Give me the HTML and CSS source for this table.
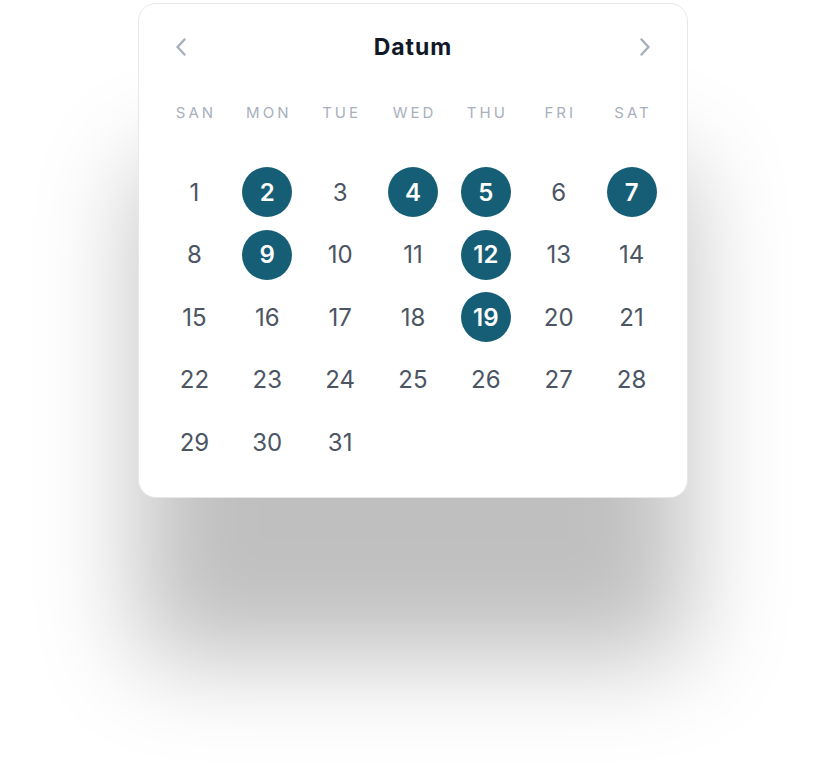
FILE: index.html
```html
<!DOCTYPE html>
<html lang="de">
<head>
<meta charset="utf-8">
<title>Datum</title>
<link rel="stylesheet" href="styles.css">
</head>
<body>
<div class="page">
<div class="card">
  <div class="header">
    <button class="nav" aria-label="Vorheriger Monat">
      <svg width="12" height="18" viewBox="0 0 12 18"><path d="M9.5 1.5 L2.5 9 L9.5 16.5" fill="none" stroke="currentColor" stroke-width="2.4" stroke-linecap="round" stroke-linejoin="round"/></svg>
    </button>
    <h1 class="title">Datum</h1>
    <button class="nav" aria-label="Nächster Monat">
      <svg width="12" height="18" viewBox="0 0 12 18"><path d="M2.5 1.5 L9.5 9 L2.5 16.5" fill="none" stroke="currentColor" stroke-width="2.4" stroke-linecap="round" stroke-linejoin="round"/></svg>
    </button>
  </div>
  <div class="weekdays">
    <span>SAN</span><span>MON</span><span>TUE</span><span>WED</span><span>THU</span><span>FRI</span><span>SAT</span>
  </div>
  <div class="days">
    <span class="day">1</span>
    <span class="day sel">2</span>
    <span class="day">3</span>
    <span class="day sel">4</span>
    <span class="day sel">5</span>
    <span class="day">6</span>
    <span class="day sel">7</span>
    <span class="day">8</span>
    <span class="day sel">9</span>
    <span class="day">10</span>
    <span class="day">11</span>
    <span class="day sel">12</span>
    <span class="day">13</span>
    <span class="day">14</span>
    <span class="day">15</span>
    <span class="day">16</span>
    <span class="day">17</span>
    <span class="day">18</span>
    <span class="day sel">19</span>
    <span class="day">20</span>
    <span class="day">21</span>
    <span class="day">22</span>
    <span class="day">23</span>
    <span class="day">24</span>
    <span class="day">25</span>
    <span class="day">26</span>
    <span class="day">27</span>
    <span class="day">28</span>
    <span class="day">29</span>
    <span class="day">30</span>
    <span class="day">31</span>
  </div>
</div>
</div>
</body>
</html>
```
FILE: styles.css
```css
* { box-sizing: border-box; }
html, body { margin: 0; padding: 0; background: #ffffff; }
body {
  font-family: Inter, "Liberation Sans", sans-serif;
}
.page {
  min-height: 776px;
  padding-top: 3px;
}
.card {
  width: 550px;
  height: 495px;
  margin: 0 auto;
  background: #ffffff;
  border: 1px solid #e5e7eb;
  border-radius: 18px;
  padding: 20px 19px 30px;
  box-shadow: 0 160px 100px rgba(0, 0, 0, 0.25);
}
.header {
  height: 46px;
  display: flex;
  align-items: center;
  justify-content: space-between;
}
.nav {
  width: 46px;
  height: 46px;
  border: 0;
  background: none;
  padding: 0;
  color: #a7afbb;
  display: flex;
  align-items: center;
  justify-content: center;
}
.title {
  margin: 0;
  font-size: 23px;
  font-weight: 700;
  color: #111827;
  letter-spacing: 1px;
}
.weekdays {
  margin-top: 26px;
  height: 32px;
  display: grid;
  grid-template-columns: repeat(7, 1fr);
  align-items: center;
  justify-items: center;
  font-size: 15px;
  letter-spacing: 3px;
  color: #a8b0bc;
}
.weekdays span { padding-left: 3px; }
.days {
  margin-top: 39px;
  display: grid;
  grid-template-columns: repeat(7, 1fr);
  grid-auto-rows: 50px;
  row-gap: 12.5px;
  justify-items: center;
  align-items: center;
}
.day {
  width: 50px;
  height: 50px;
  border-radius: 50%;
  display: flex;
  align-items: center;
  justify-content: center;
  font-size: 24px;
  color: #4b5563;
}
.day.sel {
  background: #155e75;
  color: #ffffff;
  font-weight: 600;
}
```
